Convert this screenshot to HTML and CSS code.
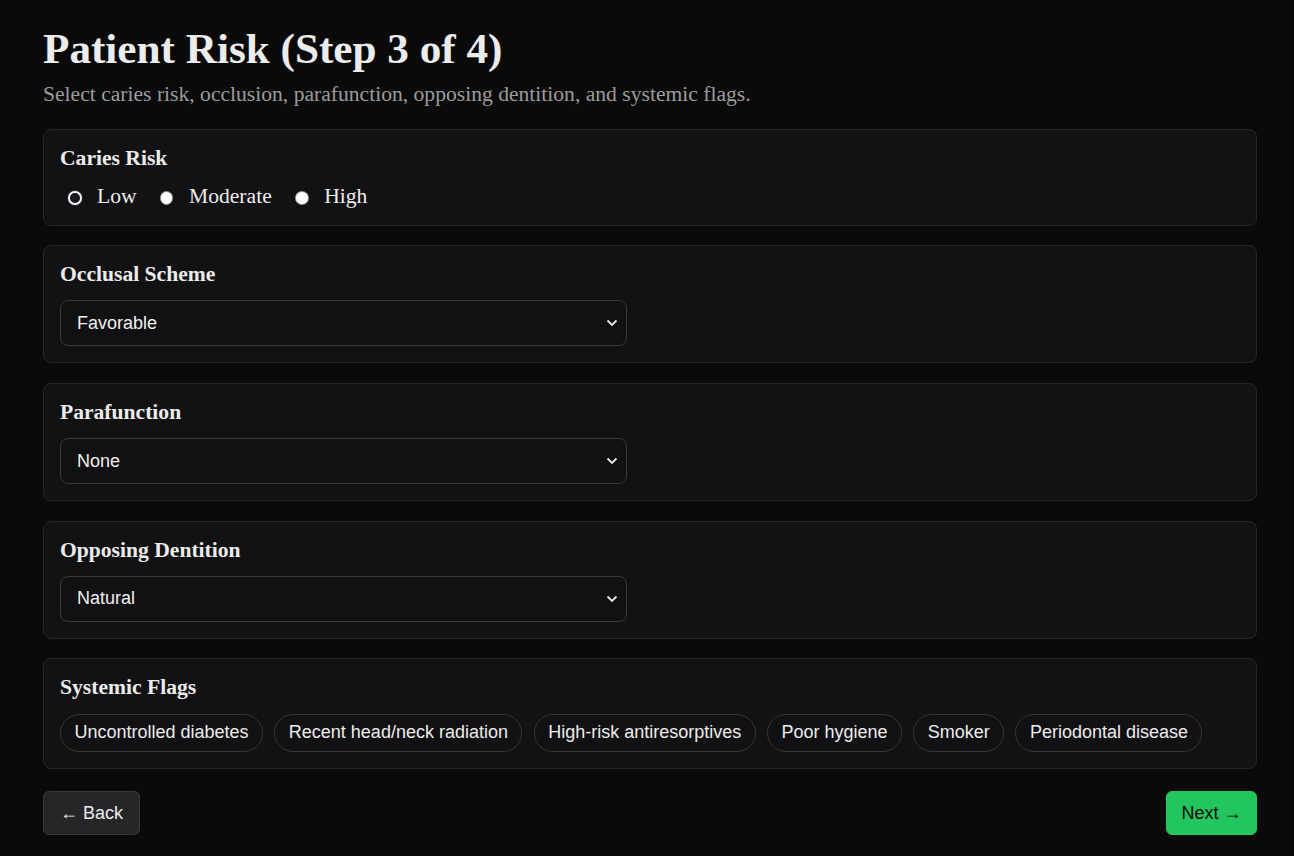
FILE: index.html
```html
<!DOCTYPE html>
<html lang="en">
<head>
<meta charset="utf-8">
<title>Patient Risk</title>
<link rel="stylesheet" href="styles.css">
</head>
<body>
<main class="page">
  <h1 class="title">Patient Risk (Step 3 of 4)</h1>
  <p class="subtitle">Select caries risk, occlusion, parafunction, opposing dentition, and systemic flags.</p>

  <section class="card">
    <div class="card-label">Caries Risk</div>
    <div class="radio-row">
      <label class="radio"><input type="radio" name="caries" checked><span>Low</span></label>
      <label class="radio"><input type="radio" name="caries"><span>Moderate</span></label>
      <label class="radio"><input type="radio" name="caries"><span>High</span></label>
    </div>
  </section>

  <section class="card">
    <div class="card-label">Occlusal Scheme</div>
    <div class="select">
      <span>Favorable</span>
      <svg class="chev" width="12" height="8" viewBox="0 0 12 8"><path d="M1.5 1.5 L6 6 L10.5 1.5" fill="none" stroke="#e8e8e8" stroke-width="1.8"/></svg>
    </div>
  </section>

  <section class="card">
    <div class="card-label">Parafunction</div>
    <div class="select">
      <span>None</span>
      <svg class="chev" width="12" height="8" viewBox="0 0 12 8"><path d="M1.5 1.5 L6 6 L10.5 1.5" fill="none" stroke="#e8e8e8" stroke-width="1.8"/></svg>
    </div>
  </section>

  <section class="card">
    <div class="card-label">Opposing Dentition</div>
    <div class="select">
      <span>Natural</span>
      <svg class="chev" width="12" height="8" viewBox="0 0 12 8"><path d="M1.5 1.5 L6 6 L10.5 1.5" fill="none" stroke="#e8e8e8" stroke-width="1.8"/></svg>
    </div>
  </section>

  <section class="card">
    <div class="card-label">Systemic Flags</div>
    <div class="chips">
      <span class="chip">Uncontrolled diabetes</span>
      <span class="chip">Recent head/neck radiation</span>
      <span class="chip">High-risk antiresorptives</span>
      <span class="chip">Poor hygiene</span>
      <span class="chip">Smoker</span>
      <span class="chip">Periodontal disease</span>
    </div>
  </section>

  <div class="nav">
    <button class="btn btn-back">← Back</button>
    <button class="btn btn-next">Next →</button>
  </div>
</main>
</body>
</html>
```

FILE: styles.css
```css
html, body {
  margin: 0;
  padding: 0;
  background: #0a0a0a;
  color: #ececec;
  font-family: "Liberation Serif", "Times New Roman", serif;
}

.page {
  padding: 24px 37px 20px 43px;
  display: flex;
  flex-direction: column;
}

.title {
  margin: 0;
  font-size: 43.2px;
  line-height: 50px;
  font-weight: bold;
  color: #ececec;
}

.subtitle {
  margin: 8px 0 0;
  font-size: 21.6px;
  line-height: 25px;
  color: #9c9c9c;
}

.card {
  margin-top: 19.4px;
  background: #121214;
  border: 1px solid #27272a;
  border-radius: 8px;
  padding: 16px;
  display: flex;
  flex-direction: column;
  gap: 13.4px;
}

.page > .subtitle + .card {
  margin-top: 22px;
}

.card-label {
  font-size: 21.6px;
  line-height: 25px;
  font-weight: bold;
  color: #ececec;
}

.radio-row {
  display: flex;
  align-items: center;
  gap: 15.4px;
  height: 24.2px;
}

.radio {
  display: flex;
  align-items: center;
  gap: 15.5px;
  font-size: 21.6px;
  line-height: 25px;
  color: #ececec;
}

.radio input {
  appearance: none;
  -webkit-appearance: none;
  margin: 3px 0 0 8px;
  width: 13.5px;
  height: 13.5px;
  border-radius: 50%;
  background: #ffffff;
  border: 1px solid #8a8a8a;
  box-sizing: border-box;
}

.radio input:checked {
  background: #17171c;
  border: 2px solid #f2f2f5;
  box-shadow: 0 0 0 1px #2a2a33;
}

.select {
  width: 567px;
  height: 46px;
  box-sizing: border-box;
  border: 1px solid #3a3a3f;
  border-radius: 8px;
  background: #111113;
  padding: 0 8px 0 16px;
  display: flex;
  align-items: center;
  justify-content: space-between;
  font-family: "Liberation Sans", Arial, sans-serif;
  font-size: 18px;
  color: #f0f0f0;
}

.chips {
  display: flex;
  flex-wrap: wrap;
  gap: 11.2px;
}

.chip {
  height: 38.4px;
  box-sizing: border-box;
  padding: 0 13.5px;
  border: 1px solid #36363a;
  border-radius: 20px;
  display: flex;
  align-items: center;
  font-family: "Liberation Sans", Arial, sans-serif;
  font-size: 18px;
  color: #ececec;
  background: #111113;
}

.nav {
  margin-top: 22px;
  display: flex;
  justify-content: space-between;
}

.btn {
  height: 44.3px;
  padding: 0 16px;
  border-radius: 6px;
  font-family: "Liberation Sans", Arial, sans-serif;
  font-size: 18px;
  cursor: pointer;
}

.btn-back {
  background: #262629;
  border: 1px solid #3a3a3e;
  color: #ececec;
}

.btn-next {
  padding: 0 14.5px;
  background: #22c55e;
  border: 1px solid #22c55e;
  color: #0b0b0b;
}
```
